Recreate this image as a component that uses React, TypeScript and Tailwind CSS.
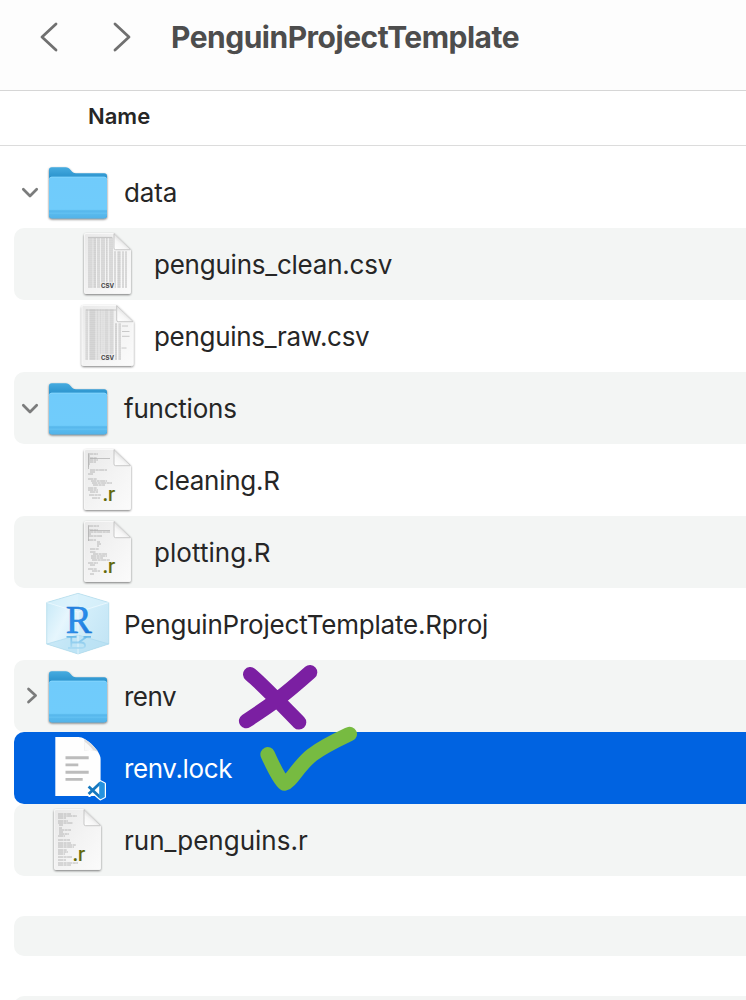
import React from "react";

type Kind = "folder" | "csv" | "csvWide" | "r" | "rproj" | "lock";

interface Entry {
  name: string;
  kind: Kind;
  child?: boolean;
  open?: boolean;
  seed?: number;
  selected?: boolean;
  spacing: string;
}

const entries: Entry[] = [
  { name: "data", kind: "folder", open: true, spacing: "tracking-[-0.1px]" },
  { name: "penguins_clean.csv", kind: "csv", child: true, spacing: "tracking-[-0.23px]" },
  { name: "penguins_raw.csv", kind: "csvWide", child: true, spacing: "tracking-[-0.31px]" },
  { name: "functions", kind: "folder", open: true, spacing: "tracking-[-0.22px]" },
  { name: "cleaning.R", kind: "r", child: true, seed: 0, spacing: "tracking-[-0.26px]" },
  { name: "plotting.R", kind: "r", child: true, seed: 1, spacing: "tracking-[0.05px]" },
  { name: "PenguinProjectTemplate.Rproj", kind: "rproj", spacing: "tracking-[-0.2px]" },
  { name: "renv", kind: "folder", open: false, spacing: "tracking-[-0.5px]" },
  { name: "renv.lock", kind: "lock", selected: true, spacing: "tracking-[-0.38px]" },
  { name: "run_penguins.r", kind: "r", seed: 2, spacing: "tracking-[0px]" },
];

function Defs() {
  return (
    <svg width="0" height="0" className="absolute">
      <defs>
        <linearGradient id="folderBack" x1="0" y1="0" x2="0" y2="1">
          <stop offset="0" stopColor="#46abe0" />
          <stop offset="0.2" stopColor="#2b93cd" />
          <stop offset="1" stopColor="#2288c4" />
        </linearGradient>
        <linearGradient id="folderFront" x1="0" y1="0" x2="0" y2="1">
          <stop offset="0" stopColor="#6fcbfb" />
          <stop offset="0.78" stopColor="#6fccfb" />
          <stop offset="0.84" stopColor="#5dbdf0" />
          <stop offset="1" stopColor="#52b3e8" />
        </linearGradient>
        <linearGradient id="paper" x1="0" y1="0" x2="1" y2="1">
          <stop offset="0" stopColor="#e9e9e9" />
          <stop offset="0.5" stopColor="#f3f3f3" />
          <stop offset="1" stopColor="#fbfbfb" />
        </linearGradient>
        <linearGradient id="curl" x1="0" y1="1" x2="0.6" y2="0.3">
          <stop offset="0" stopColor="#ffffff" />
          <stop offset="0.55" stopColor="#f6f6f6" />
          <stop offset="1" stopColor="#d2d2d2" />
        </linearGradient>
        <linearGradient id="letterR" x1="0" y1="0" x2="1" y2="1">
          <stop offset="0" stopColor="#1d6fd0" />
          <stop offset="0.5" stopColor="#2c90ee" />
          <stop offset="1" stopColor="#0f66cf" />
        </linearGradient>
        <linearGradient id="cubeLeft" x1="0" y1="0" x2="1" y2="1">
          <stop offset="0" stopColor="#c3e7f6" />
          <stop offset="0.5" stopColor="#e6f6fd" />
          <stop offset="1" stopColor="#c8e9f9" />
        </linearGradient>
        <linearGradient id="cubeRight" x1="0" y1="0" x2="1" y2="1">
          <stop offset="0" stopColor="#d9f2fc" />
          <stop offset="1" stopColor="#c0e3f4" />
        </linearGradient>
        <linearGradient id="reflect" x1="0" y1="48" x2="0" y2="60" gradientUnits="userSpaceOnUse">
          <stop offset="0" stopColor="#5fb4e6" />
          <stop offset="1" stopColor="#a5d8f2" />
        </linearGradient>
        <filter id="shadow" x="-20%" y="-20%" width="140%" height="140%">
          <feDropShadow dx="0" dy="1" stdDeviation="0.9" floodColor="#000" floodOpacity="0.55" />
        </filter>
      </defs>
    </svg>
  );
}

function Folder() {
  return (
    <g filter="url(#shadow)">
      <path d="M3 14Q3 11.3 5.7 11.3H19.5C22 11.3 23 12.3 24.6 14C26.5 16.3 27.4 17.3 30 17.3H58.3Q61 17.3 61 20V59.5Q61 62.3 58.3 62.3H5.7Q3 62.3 3 59.5Z" fill="url(#folderBack)" />
      <path d="M3 23.5Q3 20.8 5.7 20.8H58.3Q61 20.8 61 23.5V59.5Q61 62.3 58.3 62.3H5.7Q3 62.3 3 59.5Z" fill="url(#folderFront)" />
      <path d="M3.6 22.5Q4 21.2 5.9 21.2H58Q60 21.2 60.4 22.5" fill="none" stroke="#8cd8fd" strokeWidth="0.7" />
      <path d="M3 55H61" stroke="#4db0e4" strokeWidth="0.7" />
      <path d="M3 57.3H61" stroke="#64c2f2" strokeWidth="0.8" />
    </g>
  );
}

function Sheet({ x, w }: { x: number; w: number }) {
  const r = x + w;
  const f = r - 16.5;
  return (
    <>
      <path
        filter="url(#shadow)"
        d={`M${x} 7Q${x} 5.5 ${x + 1.5} 5.5H${f}L${r} 21.5V64Q${r} 65.5 ${r - 1.5} 65.5H${x + 1.5}Q${x} 65.5 ${x} 64Z`}
        fill="url(#paper)"
        stroke="#fff"
        strokeWidth="0.7"
      />
      <path d={`M${f} 5.5L${r} 21.5H${f + 1.5}Q${f} 21.5 ${f} 20Z`} fill="url(#curl)" />
      <path d={`M${f} 5.5V20Q${f} 21.7 ${f + 1.5} 21.7H${r}`} fill="none" stroke="#b4b4b4" strokeWidth="0.7" />
      <path d={`M${f} 5.5L${r} 21.5`} stroke="#b5b5b5" strokeWidth="0.6" />
    </>
  );
}

function Csv({ wide }: { wide: boolean }) {
  const x = wide ? 6 : 8.5;
  const w = wide ? 51.2 : 46;
  const cols = wide
    ? [[9.5, 2.5], [13.5, 6], [20.5, 2], [23.5, 2], [26.5, 1], [28.5, 4], [33.5, 4], [39, 2], [42.5, 2.5]]
    : [[12, 4.5], [17.5, 2.5], [21, 3], [25, 4], [30, 1.5], [33, 4], [38, 2], [41.5, 3], [46, 2], [49, 2]];
  return (
    <>
      <Sheet x={x} w={w} />
      {cols.map(([cx, cw], i) => {
        const under = cx + cw > x + w - 16.5;
        const d = `M${cx + cw / 2} ${under ? 23.5 : 9.5}V60`;
        return (
          <g key={cx}>
            <path d={d} stroke="#e0e0e0" strokeWidth={cw} />
            <path d={d} stroke={i % 3 === 1 ? "#cbcbcb" : "#d4d4d4"} strokeWidth={cw} strokeDasharray="1.2 0.8" />
          </g>
        );
      })}
      {!wide && <path d="M12 9.5H36" stroke="#c6c6c6" strokeWidth="1.3" />}
      {wide && (
        <path d="M10 10H40M46 26H52M46 31.5H53.5M46 36.3H53.5M45.5 48H50.5" stroke="#c4c4c4" strokeWidth="0.9" />
      )}
      <rect x={24} y={54} width={15} height={6.5} fill="#eeeeee" opacity="0.75" />
      <text x="25" y="59.9" fontFamily="Inter, sans-serif" fontWeight="700" fontSize="6" textLength="13.2" lengthAdjust="spacingAndGlyphs" fill="#444444">
        CSV
      </text>
    </>
  );
}

const codeLines = [
  "M12 10h10M12 12h2M12 14h9M12 16h10M12 18h8M12 20h2M12 22h1M14 26h17M14 28h5M12 30h5M12 35h9M15 37h16M16 39h20M17 41h12M12 44h9M12 46h10M14 48h8M13 51h12M16 54h8",
  "M12 10h11M12 12h1M12 14h10M12 16h22M12 18h3M12 20h14M12 24h8M21 26h3M21 28h4M21 30h2M14 33h9M14 36h6M17 38h14M15 40h16M15 42h12M16 44h18M12 47h10M14 49h5M12 53h9M16 55h8M14 58h4",
  "M12 10h13M12 12h19M12 14h8M12 17h10M12 19h15M13 21h4M13 24h3M13 26h12M13 28h4M13 30h10M12 32h7M12 36h12M12 39h13M12 41h18M12 43h16M12 46h9M12 48h10M12 50h7M12 53h14M12 56h8M12 59h20M12 61h13",
];

function RFile({ seed }: { seed: number }) {
  return (
    <>
      <Sheet x={8.5} w={46} />
      <path d={codeLines[seed]} stroke="#a8a8a8" strokeWidth="0.8" strokeDasharray="5.4 0.5 2.8 0.4" />
      {seed < 2 && <path d="M12.5 9.5V25M14 14.5H34" stroke="#adadad" strokeWidth="0.7" fill="none" />}
      <text x="26.5" y="57.3" fontFamily="Inter, sans-serif" fontWeight="500" fontSize="18.5" fill="#606608" stroke="#606608" strokeWidth="0.2">
        .r
      </text>
    </>
  );
}

function Rproj() {
  return (
    <>
      <path d="M32 5.3L62.8 14.5V56L32 66L0.7 56V14.5Z" fill="#cdeaf8" />
      <path d="M32 5.3V66L0.7 56V14.5Z" fill="url(#cubeLeft)" />
      <path d="M32 5.3L62.8 14.5V56L32 66Z" fill="url(#cubeRight)" />
      <path d="M32 5.3L62.8 14.5L32 24L0.7 14.5Z" fill="#d9f1fb" opacity="0.7" />
      <path d="M0.7 56L32 47L62.8 56L32 66Z" fill="#b4dff4" opacity="0.6" />
      <path d="M32 5.3L62.8 14.5V56L32 66L0.7 56V14.5Z" fill="none" stroke="#abd6e8" strokeWidth="0.6" />
      <path d="M0.7 14.5L32 24L62.8 14.5M32 24V66" fill="none" stroke="#f2fbff" strokeWidth="0.7" />
      <path d="M0.7 56L32 47L62.8 56" fill="none" stroke="#a8d6ec" strokeWidth="0.6" />
      <text transform="translate(19.8 45)" fontFamily="Liberation Serif, serif" fontSize="41" fill="url(#letterR)" stroke="#237fd9" strokeWidth="0.6" textLength="26" lengthAdjust="spacingAndGlyphs">
        R
      </text>
      <path d="M20.5 48.9H30.5M37.5 48.9H45" fill="none" stroke="#6dbbe8" strokeWidth="1.6" />
      <path d="M25.3 49V60M26 54.5H35C40 54.5 40.5 60 36 60H22M32.5 54.5L40.5 49" fill="none" stroke="url(#reflect)" strokeWidth="1.8" opacity="0.75" />
    </>
  );
}

function LockFile() {
  return (
    <>
      <path d="M9.3 5H32.5C40 5 54.6 19 54.6 27V64H9.3Z" fill="#fefefe" />
      <path d="M38 7C39 11 38.7 15 38.3 19C43 17.5 48 17.8 52.5 20.5C49.5 15.5 43.5 9.5 38 7Z" fill="#dedede" />
      <path d="M38.2 9.5C39.2 13 39 16 38.3 19C41.5 17.8 44.5 17.8 47 18C45 15 41.5 11.5 38.2 9.5Z" fill="#fafafa" />
      <path d="M19.5 25.7H42.7M19.5 32.9H32.3M19.5 40.2H42.7M19.5 47.4H36.7" stroke="#bcbcbc" strokeWidth="2.9" />
      <path d="M54.3 49.5L58.6 51.7V64.8L54.3 67L47.3 61L43.5 63.6L41.7 62.2L45.4 58.3L41.7 54.4L43.5 53L47.3 55.6Z" fill="#fff" stroke="#fff" strokeWidth="2.8" strokeLinejoin="round" />
      <path d="M54.4 50.8L42.6 62M42.6 54.6L54.4 65.6" stroke="#1678bf" strokeWidth="2.8" />
      <path d="M53.2 50.2L54.6 49.3L58.8 51.5V65L54.6 67.2L53.2 66Z" fill="#2592df" />
    </>
  );
}

function FileIcon({ entry }: { entry: Entry }) {
  const { kind, seed = 0 } = entry;
  return (
    <svg width="64" height="72" viewBox="0 0 64 72" className="shrink-0">
      {kind === "folder" && <Folder />}
      {kind === "csv" && <Csv wide={false} />}
      {kind === "csvWide" && <Csv wide />}
      {kind === "r" && <RFile seed={seed} />}
      {kind === "rproj" && <Rproj />}
      {kind === "lock" && <LockFile />}
    </svg>
  );
}

function Disclosure({ open }: { open?: boolean }) {
  return (
    <svg width="32" height="72" viewBox="0 0 32 72" className="shrink-0">
      {open !== undefined && (
        <path
          d={open ? "M9.3 33.2L16 40L22.7 33.2" : "M14.5 29L21.6 35.5L14.5 42"}
          fill="none"
          stroke="#7b7c7c"
          strokeWidth="2.7"
          strokeLinecap="round"
          strokeLinejoin="round"
        />
      )}
    </svg>
  );
}

function Row({ entry, striped }: { entry: Entry; striped: boolean }) {
  const tone = entry.selected
    ? "bg-[#0063e1] text-white"
    : striped
      ? "bg-[#f3f5f4] text-[#262626]"
      : "text-[#262626]";
  return (
    <li className={`flex h-[72px] items-center rounded-l-[10px] ${tone} ${entry.child ? "pl-[30px]" : ""}`}>
      <Disclosure open={entry.open} />
      <FileIcon entry={entry} />
      <span className={`ml-[14px] whitespace-nowrap pt-[2px] text-[26px] leading-[36px] ${entry.spacing}`}>{entry.name}</span>
    </li>
  );
}

function Annotations() {
  return (
    <svg width="130" height="140" viewBox="234 660 130 140" className="pointer-events-none absolute left-[234px] top-[514px]">
      <g fill="none" strokeLinecap="round" strokeLinejoin="round">
        <path d="M250.3 674.3C261 683 287 710 299 722.3M310 672.3C281 698 272 704 246.2 721" stroke="#7b1fa2" strokeWidth="14.6" />
        <path d="M267.7 754.4C272 764 280 780 284.5 783.5C291 782 298 766 312 755C324 746 337 740 349.7 734" stroke="#77bb41" strokeWidth="14.6" />
      </g>
    </svg>
  );
}

export default function App() {
  return (
    <div className="h-[1000px] w-full overflow-hidden bg-white font-['Inter',sans-serif]">
      <Defs />
      <header className="flex h-[91px] items-start border-b border-[#d6d6d6] bg-[#fdfdfd]">
        <svg width="171" height="74" viewBox="0 0 171 74" fill="none" stroke="#707070" strokeWidth="2.8" strokeLinecap="round" strokeLinejoin="round" className="shrink-0">
          <path d="M56 24L42 37L56 50" />
          <path d="M115 24L129 37L115 50" />
        </svg>
        <h1 className="whitespace-nowrap pt-[17px] text-[30px] font-bold leading-[40px] tracking-[-0.5px] text-[#4d4d4d]">PenguinProjectTemplate</h1>
      </header>
      <div className="flex h-[55px] items-center border-b border-[#dcdcdc] pb-[3px] pl-[88px] text-[22px] font-semibold text-[#262626]">
        <span>Name</span>
      </div>
      <main className="relative pl-[14px] pt-[10px]">
        <ul>
          {entries.map((entry, i) => (
            <Row key={entry.name} entry={entry} striped={i % 2 === 1} />
          ))}
        </ul>
        <div className="mt-[40px] h-[40px] rounded-l-[10px] bg-[#f3f5f4]" />
        <div className="mt-[40px] h-[40px] rounded-l-[10px] bg-[#f3f5f4]" />
        <Annotations />
      </main>
    </div>
  );
}
